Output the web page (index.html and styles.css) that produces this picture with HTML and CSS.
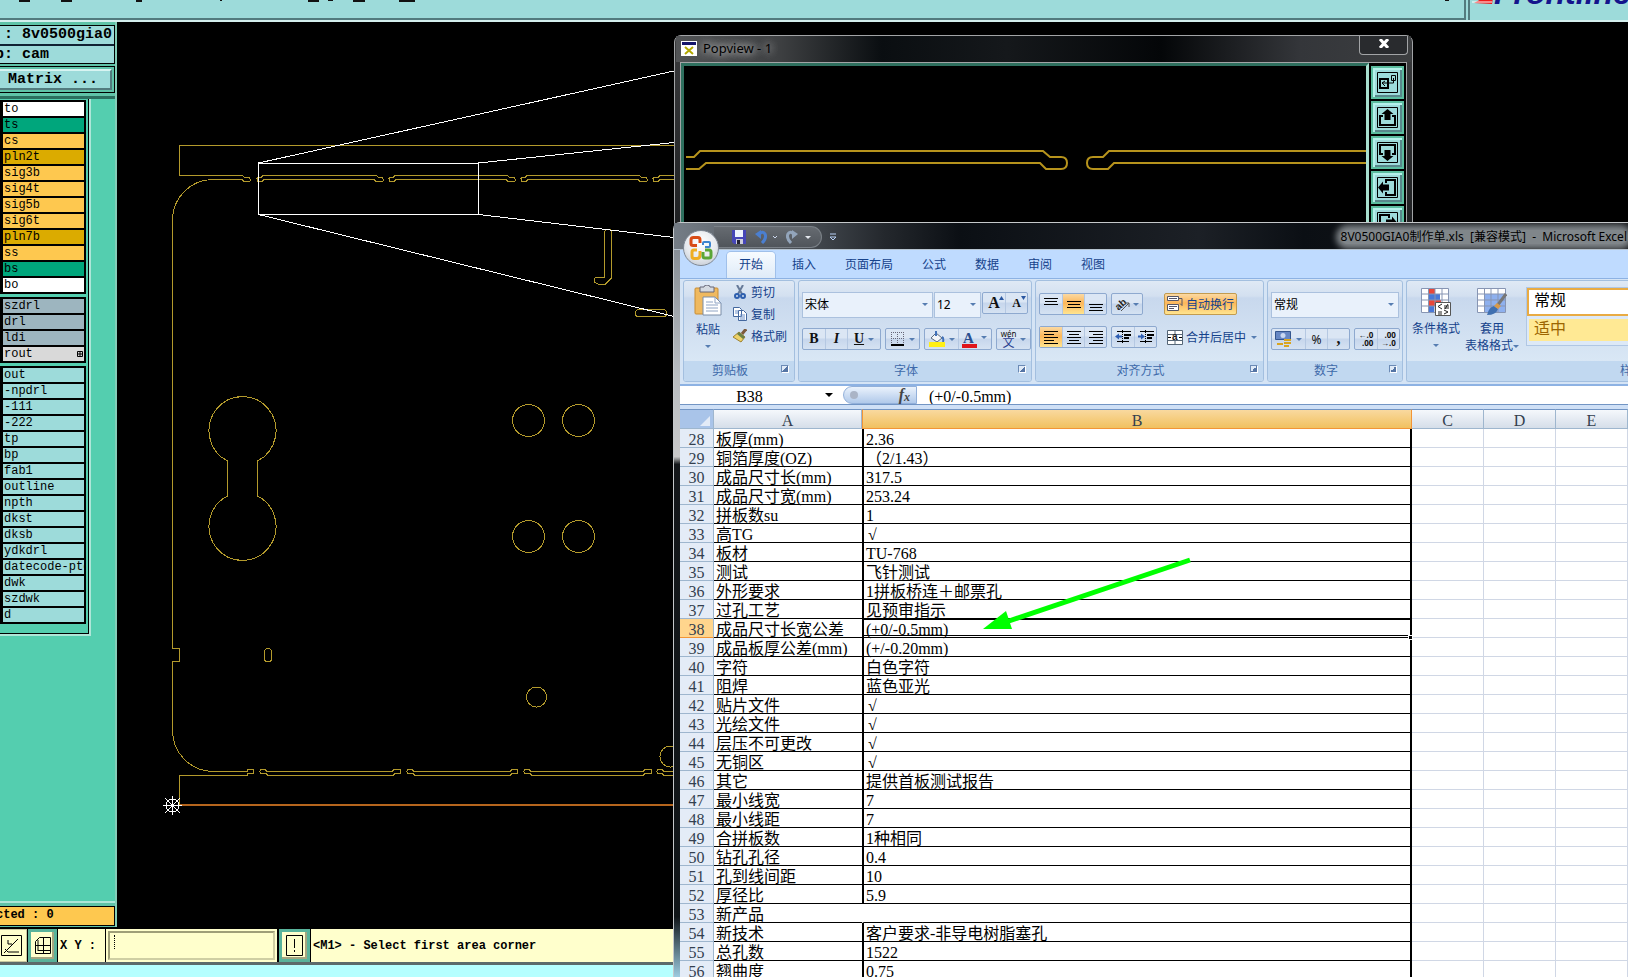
FILE: index.html
```
<!DOCTYPE html>
<html lang="zh-CN">
<head>
<meta charset="utf-8">
<title>8V0500GIA0制作单.xls - Microsoft Excel</title>
<link rel="stylesheet" href="styles.css">
</head>
<body>
<div class="desktop">
  <header class="topbar">
    <div class="topbar-main">
      <svg class="topmarks" width="1460" height="4" aria-hidden="true"><path d="M19 1h11M61 1h11M308 1h11M353 1h12M399 1h16M136 1h6M220 0h2M328 0h5M1445 0h4" stroke="#111" stroke-width="2"/></svg>
    </div>
    <div class="logo">
      <svg width="160" height="20" aria-label="Frontline"><path d="M4 3L24 -8L22 4Z" fill="#f01818"/><path d="M2 2h20" stroke="#fff"/><text x="24" y="4" class="logo-text">Frontline</text></svg>
    </div>
  </header>

  <div class="workspace">
    <aside class="sidebar">
      <div class="job">
        <div class="job-line job-name">: 8v0500gia0</div>
        <div class="job-line job-step">p: cam</div>
      </div>
      <div class="matrix-wrap"><button class="matrix">Matrix ...</button></div>
      <div class="layers-panel">
        <div class="layers">
          <ul class="layer-group">
            <li class="white">to</li><li class="green">ts</li><li class="orange">cs</li><li class="gold">pln2t</li><li class="orange">sig3b</li><li class="orange">sig4t</li><li class="orange">sig5b</li><li class="orange">sig6t</li><li class="gold">pln7b</li><li class="orange">ss</li><li class="green">bs</li><li class="white">bo</li>
          </ul>
          <ul class="layer-group">
            <li class="slate">szdrl</li><li class="slate">drl</li><li class="slate">ldi</li><li class="grey">rout<svg width="6" height="6"><path d="M.5 .5h5v5h-5zM3 0v6M0 3h6" fill="none" stroke="#000"/></svg></li>
          </ul>
          <ul class="layer-group">
            <li>out</li><li>-npdrl</li><li>-111</li><li>-222</li><li>tp</li><li>bp</li><li>fab1</li><li>outline</li><li>npth</li><li>dkst</li><li>dksb</li><li>ydkdrl</li><li>datecode-ptc</li><li>dwk</li><li>szdwk</li><li>d</li>
          </ul>
        </div>
      </div>
      <div class="selected">cted : 0</div>
    </aside>

    <main class="board">
      <svg class="drawing" aria-label="rout layer" shape-rendering="crispEdges">
        <g transform="translate(-117 -22)" fill="none" stroke="#b39a2c">
          <path d="M680 145.500H179.500V175.500H242l3 2h4q1 0 1 1v2q0 1-1 1h-5l-2-2H213A40.500 40.500 0 0 0 172.500 220V648.500H179.500V661.500H172.500V730A41 41 0 0 0 213 771.500H247l1-2h5v4h-5l-1 2H179.500V805"/>
          <path d="M263 175.500H376l3 2h3q1 0 1 1v2q0 1-1 1h-6l-2-2H264l-2 2h-4q-1 0-1-1v-2q0-1 1-1h3z"/>
          <path d="M395 175.500H507l3 2h4q1 0 1 1v2q0 1-1 1h-6l-2-2H396l-2 2h-4q-1 0-1-1v-2q0-1 1-1h3z"/>
          <path d="M527 175.500H639l3 2h4q1 0 1 1v2q0 1-1 1h-6l-2-2H528l-2 2h-4q-1 0-1-1v-2q0-1 1-1h3z"/>
          <path d="M680 175.500H660l-2 2h-4q-1 0-1 1v2q0 1 1 1h4l2-2H680"/>
          <path d="M267 771.500H392l2-2h5q2 0 2 2t-2 2h-4l-2 2H268l-2-2h-4q-2 0-2-2t2-2h3z"/>
          <path d="M414 771.500H510l2-2h4q2 0 2 2t-2 2h-4l-2 2H415l-2-2h-4q-2 0-2-2t2-2h3z"/>
          <path d="M531 771.500H643l2-2h5q2 0 2 2t-2 2h-5l-2 2H532l-2-2h-4q-2 0-2-2t2-2h3z"/>
          <path d="M680 771.500H664l-2-2h-3q-2 0-2 2t2 2h3l2 2H680"/>
          <path d="M227.500 461A33.500 34 0 1 1 257.500 461V496A33.500 34 0 1 1 227.500 496Z"/>
          <circle cx="528.500" cy="420.500" r="16"/><circle cx="578.500" cy="420.500" r="16"/>
          <circle cx="528.500" cy="536.500" r="16"/><circle cx="578.500" cy="536.500" r="16"/>
          <circle cx="536.500" cy="697" r="10"/><circle cx="670.500" cy="756.500" r="10.500"/>
          <rect x="264.500" y="648.500" width="7" height="13" rx="3"/>
          <path d="M604.500 277V232q1-3 4-3t3 3V278l-6 6H598q-4-1-4-4t4-3z"/>
          <rect x="635.500" y="309.500" width="31" height="7" rx="3"/>
          <path d="M180 805H680" stroke="#b5651d" stroke-width="2"/>
          <g stroke="#fff">
            <rect x="258.500" y="163.500" width="220" height="51"/>
            <path d="M258.500 163L674 71M478.500 163L674 142.500M478.500 214.500L674 237.500M258.500 214.500L674 316.500"/>
            <path d="M163 805.500h19M172.500 796v19M165 798l15 15M180 798l-15 15"/><circle cx="172.500" cy="805.500" r="6.500"/>
          </g>
        </g>
      </svg>
    </main>
  </div>

  <footer class="statusbar">
    <button class="tool plain" aria-label="Angle snap"><svg width="21" height="21"><path d="M.5 .5h20v20H.500zM3 18L17 4M4 14l3 3h11M7 5v4h4" fill="none" stroke="#000"/></svg></button>
    <button class="tool" aria-label="Grid"><svg width="16" height="17"><path d="M4.500 .5h11v16H.500v-12zM8.500 1v15M1 8.500h15M3 3v11M3 13.500h12" fill="none" stroke="#000"/></svg></button>
    <label class="xy" for="xy">X Y :</label>
    <span class="xy-box"><input id="xy" type="text"><i class="caret"></i></span>
    <button class="tool bang" aria-label="Interrupt"><svg width="17" height="21"><path d="M.5 .5h16v20H.500zM8.500 4v9M8.500 15v2" fill="none" stroke="#000"/></svg></button>
    <output class="message">&lt;M1&gt; - Select first area corner</output>
  </footer>
  <div class="understrip"></div>

  <section class="popview">
    <div class="pop-title">
      <svg width="16" height="15"><path d="M0 0h16v15H0z" fill="#fff"/><path d="M1 1h14v3H1z" fill="#15156a"/><path d="M4 6l8 7M12 6l-8 7" stroke="#b2a800" stroke-width="2"/></svg>
      <span>Popview - 1</span>
      <button class="pop-close" aria-label="Close"><svg width="10" height="9"><path d="M1 0l8 9M9 0L1 9" stroke="#fff" stroke-width="3"/></svg></button>
    </div>
    <div class="pop-body">
      <div class="pop-view">
        <svg class="drawing" aria-label="Zoomed rout"><g transform="translate(-684 -66)" fill="none" stroke="#b6931c" stroke-width="2"><path d="M686 157h8l6-6H1043l7 6h11q6 0 6 6t-6 6h-15l-6-6H706l-7 6H686"/><path d="M1366 151H1109l-6 6h-10q-6 0-6 6t6 6h15l6-6H1366"/></g></svg>
      </div>
      <div class="pop-tools">
        <button aria-label="Zoom window"><svg width="21" height="21"><path d="M.5 .5h20v20H.500zM14.500 3.500h4v5h-4zM16.500 6v5H11" fill="none" stroke="#000"/><path d="M3 7h8v9H3z" fill="none" stroke="#000" stroke-width="2"/><path d="M5 11h7M8 9l-3 2 3 3" fill="none" stroke="#000"/></svg></button>
        <button aria-label="Pan up"><svg width="21" height="21"><path d="M.5 .5h20v20H.500z" fill="none" stroke="#000"/><path d="M6 9H3v9h15V9h-3" fill="none" stroke="#000" stroke-width="2"/><path d="M10.500 2l6 5h-3v6h-6V7h-3z"/></svg></button>
        <button aria-label="Pan down"><svg width="21" height="21"><path d="M.5 .5h20v20H.500z" fill="none" stroke="#000"/><path d="M6 12H3V3h15v9h-3" fill="none" stroke="#000" stroke-width="2"/><path d="M10.500 19l6-5h-3V8h-6v6h-3z"/></svg></button>
        <button aria-label="Pan left"><svg width="21" height="21"><path d="M.5 .5h20v20H.500z" fill="none" stroke="#000"/><path d="M9 6V3h9v15H9v-3" fill="none" stroke="#000" stroke-width="2"/><path d="M1 10.500l5-6v3h6v6H6v3z"/></svg></button>
        <button aria-label="Pan right"><svg width="21" height="21"><path d="M.5 .5h20v20H.500z" fill="none" stroke="#000"/><path d="M12 6V3H3v15h9v-3" fill="none" stroke="#000" stroke-width="2"/><path d="M20 10.500l-5-6v3H9v6h6v3z"/></svg></button>
      </div>
    </div>
  </section>

  <section class="excel">
    <div class="xl-title">
      <div class="quick">
        <button aria-label="保存"><svg width="14" height="14"><path d="M0 0h14v14H2l-2-2z" fill="#4646b8"/><path d="M3 0h8v7H3z" fill="#eef4ff"/><path d="M4 9h7v5H4z" fill="#ccd"/><path d="M5 10h3v4H5z" fill="#223"/></svg></button>
        <button aria-label="撤消"><svg width="22" height="14"><path d="M0 4l6-4v9z" fill="#4b7fd0"/><path d="M3 5Q8 0 10 4t-3 9" fill="none" stroke="#4b7fd0" stroke-width="3"/><path d="M18 6l2 2 2-2" fill="none" stroke="#ccd8ee"/></svg></button>
        <button aria-label="恢复"><svg width="28" height="14"><path d="M12 4L6 0v9z" fill="#93a5bb"/><path d="M9 5Q4 0 2 4t3 9" fill="none" stroke="#93a5bb" stroke-width="3"/><path d="M19 6h6l-3 3z" fill="#e4e8ee"/></svg></button>
      </div>
      <button class="quick-more" aria-label="自定义快速访问工具栏"><svg width="8" height="8"><path d="M1 1h6" stroke="#b7d0f5"/><path d="M1 4h6L4 7z" fill="none" stroke="#b7d0f5"/></svg></button>
      <h1>8V0500GIA0制作单.xls&nbsp; [兼容模式] &nbsp;-&nbsp; Microsoft Excel</h1>
    </div>
    <button class="orb" aria-label="Office 按钮"><svg width="24" height="26" fill="none" stroke-width="3"><path d="M8 10.500H4Q2 10.500 2 8.500V5Q2 2.500 4.500 2.500H9Q11 2.500 11 5V8" stroke="#d84b16"/><path d="M14 10V8Q14 7 15 7H20Q21 7 21 8V11Q21 12 20 12H16" stroke="#3d84cf" stroke-width="2"/><path d="M11 16V20Q11 23.500 8 23.500H5Q3 23.500 3 21V17Q3 15 5 15H8" stroke="#efae22"/><path d="M16 15H20Q22 15 22 17V21Q22 23 20 23H16Q14 23 14 21V17" stroke="#5aa637"/></svg></button>
    <nav class="tabs">
      <button class="active">开始</button><button>插入</button><button>页面布局</button><button>公式</button><button>数据</button><button>审阅</button><button>视图</button>
    </nav>
    <div class="ribbon">
      <section class="group g-clip">
        <div class="body">
          <button class="big"><svg width="28" height="32"><rect x="1" y="3" width="23" height="26" rx="1" fill="#efb95f" stroke="#c98d33"/><path d="M6 2h4q0-2 3-2t3 2h4v5H6z" fill="#d5dae1" stroke="#667"/><path d="M9 12h12l6 6v12H9z" fill="#fff" stroke="#7b8da8"/><path d="M21 12v6h6M12 17h7M12 20h12M12 23h12M12 26h12" fill="none" stroke="#8fa4c4"/></svg><span>粘贴</span><i class="arrow"></i></button>
          <div class="stack">
            <button><svg width="14" height="14"><path d="M4 0l5 9M10 0L5 9" stroke="#667a99" stroke-width="2"/><g fill="none" stroke="#2e5fae" stroke-width="2"><circle cx="4" cy="11" r="2"/><circle cx="10" cy="11" r="2"/></g></svg>剪切</button>
            <button><svg width="14" height="14"><path d="M.5 .5h6l2 2v7h-8zM5.500 3.500h5l3 3v7h-8z" fill="#fff" stroke="#43679e"/><path d="M2 4h3M2 6h3M7 8h5M7 10h5M7 12h5" stroke="#6d90c8"/></svg>复制</button>
            <button><svg width="14" height="14"><path d="M13 0L9 5" stroke="#7c5a3c" stroke-width="3"/><path d="M6 3l6 5-4 5L0 8z" fill="#edd268" stroke="#9d8133"/><path d="M6 3l6 5-2 2-6-5z" fill="#6b8047"/></svg>格式刷</button>
          </div>
        </div>
        <h2>剪贴板<i class="launch"></i></h2>
      </section>
      <section class="group g-font">
        <div class="body rows">
          <div class="row tall">
            <span class="combo font"><select aria-label="字体"><option>宋体</option></select></span>
            <span class="combo size"><select aria-label="字号"><option>12</option></select></span>
            <div class="set push"><button class="serif f16" aria-label="增大字号">A<svg class="tick" width="5" height="4"><path d="M0 4h5L2.500 0z" fill="#2a57a0"/></svg></button><button class="serif f12" aria-label="减小字号">A<svg class="tick" width="5" height="4"><path d="M0 0h5L2.500 4z" fill="#2a57a0"/></svg></button></div>
          </div>
          <div class="row">
            <div class="set"><button class="serif">B</button><button class="serif it">I</button><button class="serif ul wide">U<i class="arrow"></i></button></div>
            <div class="set"><button class="wide" aria-label="边框"><svg width="14" height="14"><path d="M.5 0v12M6.500 0v12M12.500 0v12M0 .5h13M0 6.500h13" stroke="#667" stroke-dasharray="1 1"/><path d="M0 13h13" stroke="#000" stroke-width="2"/></svg><i class="arrow"></i></button></div>
            <div class="set"><button class="wide" aria-label="填充颜色"><svg width="16" height="16"><path d="M7 2l6 5-5 4-6-4z" fill="#f3f5f8" stroke="#5c6b80"/><path d="M7 5V0M13 6q2 1 1 5" fill="none" stroke="#4071b9" stroke-width="2"/><path d="M0 11h16v5H0z" fill="#ffef16"/></svg><i class="arrow"></i></button><button class="wide serif fontcolor" aria-label="字体颜色">A<i class="arrow"></i></button></div>
            <div class="set"><button class="wide" aria-label="拼音"><span class="wen"><small>wén</small><b>文</b></span><i class="arrow"></i></button></div>
          </div>
        </div>
        <h2>字体<i class="launch"></i></h2>
      </section>
      <section class="group g-align">
        <div class="body split">
          <div class="rows">
            <div class="row">
              <div class="set"><button aria-label="顶端对齐"><svg width="14" height="14"><path d="M0 1.500h14M1 4.500h12M0 7.500h14" stroke="#000"/></svg></button><button class="on" aria-label="垂直居中"><svg width="14" height="14"><path d="M0 4.500h14M1 7.500h12M0 10.500h14" stroke="#000"/></svg></button><button aria-label="底端对齐"><svg width="14" height="14"><path d="M0 7.500h14M1 10.500h12M0 13.500h14" stroke="#000"/></svg></button></div>
              <div class="set"><button class="orient" aria-label="方向"><svg width="16" height="15"><text x="1" y="11" class="ab" transform="rotate(-42 6 9)">ab</text><path d="M6 14l8-8M10 6h4v4" fill="none" stroke="#555"/></svg><i class="arrow"></i></button></div>
            </div>
            <div class="row">
              <div class="set"><button class="on" aria-label="左对齐"><svg width="14" height="13"><path d="M0 .5h14M0 3.500h10M0 6.500h14M0 9.500h10M0 12.500h14" stroke="#000"/></svg></button><button aria-label="居中"><svg width="14" height="13"><path d="M0 .5h14M2 3.500h10M0 6.500h14M2 9.500h10M0 12.500h14" stroke="#000"/></svg></button><button aria-label="右对齐"><svg width="14" height="13"><path d="M0 .5h14M4 3.500h10M0 6.500h14M4 9.500h10M0 12.500h14" stroke="#000"/></svg></button></div>
              <div class="set"><button aria-label="减少缩进"><svg width="16" height="14"><path d="M7.500 0v14" stroke="#000" stroke-dasharray="1 1"/><path d="M2 1.500h14M2 11.500h12" stroke="#000"/><path d="M9 5h7M9 8h5" stroke="#000" stroke-width="2"/><path d="M0 6.500l4-3v2h3v2H4v2z" fill="#2f5fb3"/></svg></button><button aria-label="增加缩进"><svg width="16" height="14"><path d="M7.500 0v14" stroke="#000" stroke-dasharray="1 1"/><path d="M2 1.500h14M2 11.500h12" stroke="#000"/><path d="M9 5h7M9 8h5" stroke="#000" stroke-width="2"/><path d="M7 6.500l-4-3v2H0v2h3v2z" fill="#2f5fb3"/></svg></button></div>
            </div>
          </div>
          <div class="rows divided">
            <div class="row"><button class="text on boxed"><svg width="16" height="16"><path d="M.5 .5h11v4H.500zM.5 8.500h11v6H.500z" fill="#fff" stroke="#556"/><path d="M2 2.500h8M2 10.500h8M2 12.500h5M11 2.500h4v7l-2-2" fill="none" stroke="#556"/></svg>自动换行</button></div>
            <div class="row"><button class="text"><svg width="16" height="15"><path d="M.5 .5h15v14H.500zM8 0v4M8 11v4M0 4.500h16M0 10.500h16" fill="#fff" stroke="#567"/><text x="5" y="10" class="ab">a</text><path d="M1 7.500h3M12 7.500h3" stroke="#000"/></svg>合并后居中<i class="arrow"></i></button></div>
          </div>
        </div>
        <h2>对齐方式<i class="launch"></i></h2>
      </section>
      <section class="group g-num">
        <div class="body rows">
          <div class="row tall"><span class="combo numfmt"><select aria-label="数字格式"><option>常规</option></select></span></div>
          <div class="row">
            <div class="set"><button class="wide" aria-label="会计数字格式"><svg width="17" height="16"><path d="M.5 .5h15v8H.500z" fill="#6687c4" stroke="#34568f"/><circle cx="8" cy="4.500" r="2.500" fill="#c9d8f2"/><path d="M9 9h7M9 12h7M9 15h5M2 13h6" stroke="#d9a520" stroke-width="2"/></svg><i class="arrow"></i></button><button class="pct">%</button><button class="serif f16" aria-label="千位分隔">,</button></div>
            <div class="set"><button class="dec" aria-label="增加小数位数"><span>←.0<br>.00</span></button><button class="dec" aria-label="减少小数位数"><span>.00<br>→.0</span></button></div>
          </div>
        </div>
        <h2>数字<i class="launch"></i></h2>
      </section>
      <section class="group g-style">
        <div class="body">
          <button class="big"><svg width="30" height="30"><path d="M.5 1.500h27v24H.500z" fill="#fff"/><path d="M7 1h7v6H7zM7 13h13v6H7z" fill="#e8473a"/><path d="M7 7h12v6H7zM7 19h6v6H7z" fill="#4878d8"/><path d="M.5 1.500h27v24H.500zM7.500 1v24M14 1v24M21 1v24M0 7h28M0 13h28M0 19h28" fill="none" stroke="#8795b3"/><path d="M14.500 15.500h15v13h-15z" fill="#fff" stroke="#555"/><path d="M21 17l-4 2.500 4 2.500M17 25h4M17 27h4M23 19h5M23 21h5M27 17l-3 5M23 23l4 2-4 2" fill="none" stroke="#222"/></svg><span>条件格式</span><i class="arrow"></i></button>
          <button class="big"><svg width="30" height="30"><path d="M.5 1.500h28v24H.500z" fill="#fff"/><path d="M8 7h20v18H8z" fill="#8eb0ee"/><path d="M.5 1.500h28v24H.500zM7.500 1v24M14 1v24M21 1v24M0 7h28M0 13h28M0 19h28" fill="none" stroke="#8795b3"/><path d="M29 7l-9 12" stroke="#777" stroke-width="3"/><path d="M10 28q2-8 7-9l4 3q-2 6-11 6z" fill="#3f6fb0"/><path d="M17 19l3-3 4 3-3 3z" fill="#d89a4a"/></svg><span>套用</span><span>表格格式<i class="arrow"></i></span></button>
          <div class="gallery"><button class="normal">常规</button><button class="medium">适中</button></div>
        </div>
        <h2 class="edge">样式</h2>
      </section>
    </div>
    <div class="formula">
      <span class="namebox"><input type="text" value="B38" aria-label="名称框"><i class="arrow dark"></i></span>
      <span class="fx"><i class="dot"></i><em>f<sub>x</sub></em></span>
      <input class="fbox" type="text" value="(+0/-0.5mm)" aria-label="编辑栏">
    </div>
    <div class="sheet">
      <table>
        <colgroup><col class="c0"><col class="c1"><col class="c2"><col class="c3"><col class="c3"><col></colgroup>
        <thead><tr><th class="corner"><svg width="10" height="10"><path d="M10 0v10H0z" fill="#e3ebf7"/></svg></th><th>A</th><th class="sel">B</th><th>C</th><th>D</th><th>E</th></tr></thead>
        <tbody>
          <tr><th>28</th><td>板厚(mm)</td><td>2.36</td><td></td><td></td><td></td></tr>
          <tr><th>29</th><td>铜箔厚度(OZ)</td><td>（2/1.43）</td><td></td><td></td><td></td></tr>
          <tr><th>30</th><td>成品尺寸长(mm)</td><td>317.5</td><td></td><td></td><td></td></tr>
          <tr><th>31</th><td>成品尺寸宽(mm)</td><td>253.24</td><td></td><td></td><td></td></tr>
          <tr><th>32</th><td>拼板数su</td><td>1</td><td></td><td></td><td></td></tr>
          <tr><th>33</th><td>高TG</td><td class="ck">√</td><td></td><td></td><td></td></tr>
          <tr><th>34</th><td>板材</td><td>TU-768</td><td></td><td></td><td></td></tr>
          <tr><th>35</th><td>测试</td><td>飞针测试</td><td></td><td></td><td></td></tr>
          <tr><th>36</th><td>外形要求</td><td>1拼板桥连＋邮票孔</td><td></td><td></td><td></td></tr>
          <tr><th>37</th><td>过孔工艺</td><td>见预审指示</td><td></td><td></td><td></td></tr>
          <tr class="cur"><th>38</th><td>成品尺寸长宽公差</td><td>(+0/-0.5mm)<i class="handle"></i></td><td></td><td></td><td></td></tr>
          <tr><th>39</th><td>成品板厚公差(mm)</td><td>(+/-0.20mm)</td><td></td><td></td><td></td></tr>
          <tr><th>40</th><td>字符</td><td>白色字符</td><td></td><td></td><td></td></tr>
          <tr><th>41</th><td>阻焊</td><td>蓝色亚光</td><td></td><td></td><td></td></tr>
          <tr><th>42</th><td>贴片文件</td><td class="ck">√</td><td></td><td></td><td></td></tr>
          <tr><th>43</th><td>光绘文件</td><td class="ck">√</td><td></td><td></td><td></td></tr>
          <tr><th>44</th><td>层压不可更改</td><td class="ck">√</td><td></td><td></td><td></td></tr>
          <tr><th>45</th><td>无铜区</td><td class="ck">√</td><td></td><td></td><td></td></tr>
          <tr><th>46</th><td>其它</td><td>提供首板测试报告</td><td></td><td></td><td></td></tr>
          <tr><th>47</th><td>最小线宽</td><td>7</td><td></td><td></td><td></td></tr>
          <tr><th>48</th><td>最小线距</td><td>7</td><td></td><td></td><td></td></tr>
          <tr><th>49</th><td>合拼板数</td><td>1种相同</td><td></td><td></td><td></td></tr>
          <tr><th>50</th><td>钻孔孔径</td><td>0.4</td><td></td><td></td><td></td></tr>
          <tr><th>51</th><td>孔到线间距</td><td>10</td><td></td><td></td><td></td></tr>
          <tr><th>52</th><td>厚径比</td><td>5.9</td><td></td><td></td><td></td></tr>
          <tr class="merged"><th>53</th><td>新产品</td><td></td><td></td><td></td><td></td></tr>
          <tr><th>54</th><td>新技术</td><td>客户要求-非导电树脂塞孔</td><td></td><td></td><td></td></tr>
          <tr><th>55</th><td>总孔数</td><td>1522</td><td></td><td></td><td></td></tr>
          <tr><th>56</th><td>翘曲度</td><td>0.75</td><td></td><td></td><td></td></tr>
        </tbody>
      </table>
      <svg class="pointer" width="210" height="76" aria-hidden="true"><path d="M208 3L24 65" stroke="#0f0" stroke-width="5"/><path d="M1 72L24 54L30 72Z" fill="#0f0"/></svg>
    </div>
  </section>
</div>
</body>
</html>
```
FILE: styles.css
```
* { box-sizing: border-box; }
html, body { height: 100%; }
body { margin: 0; overflow: hidden; background: #000; font-family: "Noto Sans", "Noto Sans CJK SC", sans-serif; font-size: 12px; }
button, input, select { font: inherit; color: inherit; margin: 0; padding: 0; border: 0; background: none; border-radius: 0; }
svg { display: block; flex: none; }
ul, h1, h2 { margin: 0; padding: 0; font-weight: normal; font-size: 12px; list-style: none; }

.desktop { position: relative; height: 100vh; display: flex; flex-direction: column; overflow: hidden; }

/* CAM station: header */
.topbar { display: flex; height: 22px; background: #9ddbda; border-bottom: 2px solid #d4efee; flex: none; }
.topbar-main { flex: 1; min-width: 0; overflow: hidden; border-right: 2px solid #527b7e; border-bottom: 2px solid #527b7e; }
.logo { width: 160px; flex: none; overflow: hidden; border-left: 2px solid #527b7e; margin-left: 2px; }
.logo-text { font: italic bold 32px "Liberation Sans", sans-serif; fill: #14148c; }

/* CAM station: layer list */
.workspace { flex: 1; min-height: 0; display: flex; }
.sidebar { width: 117px; flex: none; display: flex; flex-direction: column; background: #5fc3a8; border-right: 2px solid #84cdb8; padding: 3px 0 1px; font: bold 12px "Liberation Mono", monospace; overflow: hidden; white-space: nowrap; }
.job { border: 1px solid #000; border-left: 0; background: #9ddbda; font-size: 15px; }
.job-line { height: 18px; line-height: 18px; }
.job-step { border-top: 2px solid #123; height: 19px; text-indent: -5px; }
.job-name { text-indent: 4px; }
.matrix-wrap { margin: 2px 0 3px 0; border: 1px solid #000; border-left: 0; padding: 2px 2px 2px 0; }
.matrix { display: block; width: 100%; height: 21px; background: #9ddbda; font-size: 15px; text-align: left; padding-left: 8px; border: 2px solid #527b7e; border-left: 0; border-top-color: #d8f4f2; }
.layers-panel { flex: 1; min-height: 0; background: #54ceaf; border-top: 3px solid #2b6f5f; border-bottom: 2px solid #aee6d8; }
.layers { width: 91px; border-right: 2px solid #aee6d8; border-bottom: 2px solid #aee6d8; padding: 1px 0 7px; box-shadow: inset -1px -1px #000; }
.layer-group { width: 86px; padding: 2px 2px 1px 3px; background: #000; margin-bottom: 3px; }
.layer-group li { display: flex; align-items: center; justify-content: space-between; height: 14px; line-height: 14px; margin-bottom: 2px; padding: 0 1px; background: #9ddbda; overflow: hidden; }
.layer-group li:last-child { margin-bottom: 1px; }
.layer-group .white { background: #fff; }
.layer-group .green { background: #00a67c; }
.layer-group .orange { background: #fec84f; }
.layer-group .gold { background: #dbab00; }
.layer-group .slate { background: #9db5bf; }
.layer-group .grey { background: #d9d9d9; }
.selected { height: 20px; line-height: 17px; margin-top: 3px; background: #fec84f; border: 1px solid #000; border-left: 0; text-indent: -4px; }

.board { flex: 1; min-width: 0; background: #000; position: relative; }
.drawing { width: 100%; height: 100%; }

/* CAM station: status line */
.statusbar { flex: none; display: flex; height: 33px; margin-top: 2px; background: #000; gap: 1px; font: bold 12px "Liberation Mono", monospace; }
.tool { width: 29px; flex: none; display: flex; align-items: center; justify-content: center; background: #ffffcc; border: 3px solid #59b39b; box-shadow: inset -2px -2px #a5a581; }
.tool.plain { width: 27px; border: 1px solid #c8c8a0; border-left: 0; box-shadow: none; padding-right: 4px; }
.xy { width: 47px; display: flex; align-items: center; background: #ffffcc; padding-left: 2px; white-space: nowrap; }
.xy-box { width: 171px; display: flex; padding: 2px; background: #ffffcc; position: relative; }
.xy-box input { width: 100%; border: 2px solid #9f9f78; border-right-color: #cfcfa3; border-bottom-color: #cfcfa3; }
.caret { position: absolute; left: 8px; top: 6px; height: 14px; border-left: 1px dotted #000; }
.tool.bang { margin-left: 1px; width: 31px; }
.message { flex: 1; display: flex; align-items: center; background: #ffffcc; padding-left: 2px; white-space: nowrap; }
.understrip { flex: none; height: 15px; background: #b5ffff; border-top: 3px solid #5c6b6b; }

/* Popview window */
.popview { position: absolute; left: 674px; top: 35px; width: 739px; height: 240px; background: linear-gradient(#3a3b3d, #17191b); border: 1px solid #a2a4a6; border-radius: 7px 7px 0 0; padding: 0 5px 0 5px; }
.pop-title { display: flex; align-items: center; height: 26px; gap: 6px; margin: 0 -4px; padding: 0 0 2px 5px; background: linear-gradient(90deg, #525456 0, #3e4042 14%, #0a0e11 28%, #15181b 45%, #040608 66%, #34363a 85%, #3c3e40); font-size: 13px; line-height: 16px; color: #000; }
.pop-title span { text-shadow: 0 0 8px #ddd, 0 0 8px #aaa; }
.pop-close { margin: 0 3px 0 auto; width: 49px; height: 19px; align-self: flex-start; display: flex; align-items: center; justify-content: center; border: 1px solid #a2a4a6; border-top: 0; border-radius: 0 0 4px 4px; background: #292b2e; }
.pop-close svg { margin-bottom: 3px; }
.pop-body { display: flex; height: 200px; border: 1px solid #a2a4a6; background: #000; }
.pop-view { flex: 1; min-width: 0; border: 3px solid #2f705f; border-right-color: #a8dfcf; border-bottom: 0; }
.pop-tools { width: 37px; display: flex; flex-direction: column; gap: 2px; padding: 3px 2px 0; }
.pop-tools button { width: 33px; height: 33px; flex: none; display: flex; align-items: center; justify-content: center; background: #9ddbda; border: 2px solid #5bbd9f; box-shadow: inset 2px 2px #b5f1eb, inset -2px -2px #59888b; }

/* Excel window */
.excel { position: absolute; left: 673px; right: 0; top: 222px; bottom: 0; display: flex; flex-direction: column; padding-left: 6px; background: linear-gradient(#7d858d 0, #b8bcc0 20%, #c9c9c9 31%, #14171a 32%, #101518 92%, #9ccbe0); border-top: 1px solid #c5c8ca; border-left: 1px solid #c5c8ca; border-radius: 7px 0 0 0; color: #15428b; }
.xl-title { flex: none; display: flex; align-items: center; height: 27px; margin-left: -6px; padding: 2px 1px 0 40px; background: linear-gradient(90deg, #757d86 0, #555b62 10%, #24282d 22%, #0b0f14 30%, #1c2026 55%, #0b0f14 66%, #181a1d); border-bottom: 1px solid #b7c4d0; overflow: hidden; }
.quick { display: flex; align-items: center; gap: 9px; height: 22px; width: 108px; padding-left: 18px; background: linear-gradient(#666b71, #50555b); border: 1px solid #7a8087; border-left: 0; border-radius: 0 11px 11px 0; }
.quick-more { margin-left: 7px; }
.xl-title h1 { margin-left: auto; color: #000; white-space: nowrap; line-height: 14px; background: #80868a; box-shadow: 0 0 6px 5px #80868a; border-radius: 8px; }
.orb { position: absolute; left: 9px; top: 7px; width: 36px; height: 36px; border-radius: 50%; background: radial-gradient(circle at 50% 35%, #fff, #e6e9ee 55%, #b8bfc9); border: 1px solid #7f8894; display: flex; align-items: center; justify-content: center; }
.tabs { flex: none; display: flex; gap: 5px; height: 28px; padding: 2px 0 0 47px; background: #bfdbff; }
.tabs button { padding: 0 12px 2px; height: 26px; white-space: nowrap; }
.tabs .active { background: linear-gradient(#f7fbff, #dfebf8); border-radius: 4px 4px 0 0; box-shadow: 0 0 0 1px #a0c0ea; clip-path: inset(-1px -1px 0 -1px); }
.ribbon { flex: none; display: flex; gap: 3px; height: 108px; padding: 1px 0 2px 3px; background: #d5e4f5; border-top: 1px solid #8db2e3; border-bottom: 2px solid #8db2e3; overflow: hidden; }
.group { display: flex; flex-direction: column; flex: none; border: 1px solid #a3bfdf; border-radius: 3px; background: linear-gradient(#dfe9f5 0, #d3e0f0 15%, #c8d8ed 17%, #d9e7f5 80%); overflow: hidden; }
.g-clip { width: 112px; } .g-font { width: 234px; } .g-align { width: 229px; } .g-num { width: 136px; } .g-style { flex: 1; border-right: 0; border-radius: 3px 0 0 3px; }
.group h2 { height: 20px; line-height: 20px; text-align: center; background: #c1d8f0; color: #3e6aaa; position: relative; padding-right: 18px; flex: none; }
.group h2.edge { text-align: right; padding: 0; margin-right: -16px; }
.launch { position: absolute; right: 5px; top: 4px; width: 8px; height: 8px; border: 1px solid #6b8ab5; border-right-color: #fff; border-bottom-color: #fff; background: linear-gradient(135deg, #dfeaf7 50%, #5575a5 50%); }
.body { flex: 1; min-height: 0; display: flex; }
.rows { display: flex; flex-direction: column; padding: 11px 3px 0; gap: 13px; }
.body.rows { gap: 10px; }
.row { display: flex; gap: 4px; height: 22px; align-items: flex-start; flex: none; }
.row.tall { height: 26px; gap: 1px; }
.push { margin-left: auto; }
.set { display: flex; border: 1px solid #8ea9cf; border-radius: 2px; background: linear-gradient(#dbe6f4 45%, #c6d6ec 50%, #d5e2f2); height: 22px; flex: none; }
.set button { width: 22px; height: 20px; display: flex; align-items: center; justify-content: center; gap: 4px; position: relative; }
.set button + button { border-left: 1px solid #b5c8e2; }
.set .wide { width: 33px; }
.set .orient { width: 30px; gap: 2px; }
.ab { font: bold 10px "Liberation Sans", sans-serif; fill: #222; }
.tick { position: absolute; right: 1px; top: 3px; }
.serif { font-family: "Liberation Serif", serif; font-weight: bold; font-size: 14px; color: #111; line-height: 18px; }
.f16 { font-size: 16px; } .f12 { font-size: 12px; }
.it { font-style: italic; }
.ul { text-decoration: underline; }
.set .fontcolor { color: #2a4f8f; font-size: 15px; gap: 7px; padding-bottom: 3px; }
.fontcolor::before { content: ""; position: absolute; left: 3px; bottom: 1px; width: 15px; height: 4px; background: #e0151b; }
.pct { color: #111; font-size: 12px; }
.dec { color: #111; font: bold 8px/8px "Noto Sans", sans-serif; text-align: right; }
.wen { display: flex; flex-direction: column; align-items: center; line-height: 9px; color: #111; }
.wen small { font-size: 8px; line-height: 7px; } .wen b { font-size: 12px; line-height: 12px; color: #2a3f8f; font-weight: normal; }
.arrow { display: inline-block; width: 0; height: 0; flex: none; border: 3px solid transparent; border-top-color: #567db1; border-bottom: 0; vertical-align: 2px; }
.arrow.dark { border-width: 4px 4px 0; border-top-color: #000; }
.combo { position: relative; display: flex; height: 26px; background: #e9f1fb; border: 1px solid #abc1de; color: #000; }
.combo select { width: 100%; appearance: none; padding: 0 0 2px 2px; }
.combo::after { content: ""; position: absolute; right: 4px; top: 10px; border: 3px solid transparent; border-top-color: #567db1; border-bottom: 0; pointer-events: none; }
.font { width: 131px; } .size { width: 47px; } .numfmt { width: 128px; }
.big { display: flex; flex-direction: column; align-items: center; padding-top: 4px; line-height: 17px; white-space: nowrap; }
.g-clip .big { width: 48px; } .g-clip .big svg { margin-bottom: 4px; }
.g-clip .big .arrow { margin-top: 7px; }
.g-style .big { width: 58px; padding-top: 6px; } .g-style .big svg { margin-bottom: 3px; } .g-style .big + .big { width: 54px; }
.g-style .big > .arrow { margin-top: 7px; }
.stack { display: flex; flex-direction: column; }
.stack button { display: flex; align-items: center; gap: 4px; height: 22px; padding-left: 1px; white-space: nowrap; }
.on { background: linear-gradient(#fbd9a2, #fcb75a 45%, #ffe48f); }
.split .rows { padding-top: 12px; gap: 11px; }
.divided .row { margin-left: 1px; }
.text { display: flex; align-items: center; gap: 3px; height: 22px; white-space: nowrap; border: 1px solid transparent; }
.split .text { padding: 0 2px; }
.text .arrow { margin-left: 2px; }
.split .boxed { border: 1px solid #c29b50; border-radius: 2px; }
.gallery { flex: 1; margin: 6px 0 15px 7px; border: 1px solid #b0c7e4; border-right: 0; background: #dde9f7; display: flex; flex-direction: column; gap: 3px; color: #000; font-size: 16px; }
.gallery button { text-align: left; line-height: 18px; padding: 0 0 5px 5px; }
.gallery .normal { border: 2px solid #e9ab43; border-right: 0; height: 28px; background: #fff; }
.gallery .medium { height: 22px; margin-left: 2px; background: #ffe994; color: #9c6500; }

.formula { flex: none; display: flex; height: 19px; background: #fff; border-bottom: 1px solid #7295c4; color: #000; font: 16px "Liberation Serif", "Noto Sans CJK SC", serif; }
.formula input { line-height: 17px; padding-top: 2px; }
.namebox { width: 163px; display: flex; align-items: center; }
.namebox input { width: 141px; text-align: center; padding-right: 2px; }
.namebox .arrow { margin-left: 4px; }
.fx { width: 74px; display: flex; align-items: center; justify-content: space-between; padding: 0 6px; background: linear-gradient(#eaf2fc, #b0c9ea); border: 1px solid #92b0da; border-radius: 9px 0 0 9px; color: #444; font-weight: bold; }
.fx .dot { width: 8px; height: 8px; border-radius: 50%; background: #aab4c6; }
.fx sub { font-size: 12px; vertical-align: -1px; }
.formula .fbox { flex: 1; min-width: 0; padding-left: 12px; }

.sheet { flex: 1; min-height: 0; overflow: hidden; position: relative; background: #fff; border-top: 4px solid #cfe0f6; font: 16px "Liberation Serif", "Noto Sans CJK SC", serif; }
table { width: 100%; table-layout: fixed; border-collapse: separate; border-spacing: 0; color: #000; }
.c0 { width: 34px; } .c1 { width: 148px; } .c2 { width: 550px; } .c3 { width: 72px; }
th, td { height: 19px; line-height: 15px; padding: 3px 0 0; white-space: nowrap; font-weight: normal; }
td { padding-left: 2px; border-bottom: 1px solid #d0d7e5; border-right: 1px solid #d0d7e5; }
th { background: #e4ecf7; color: #333f4f; border-bottom: 1px solid #9eb6ce; border-right: 1px solid #9eb6ce; }
thead th { height: 20px; background: linear-gradient(#f5f8fc, #d5dee9); border-top: 1px solid #7295c4; }
thead .sel { background: linear-gradient(#f9d99f, #f1c15f); border-right-color: #f29536; border-bottom-color: #f29536; border-left: 1px solid #f29536; }
thead .corner { background: #a9c4e9; }
.corner svg { margin: 0 0 0 20px; }
td:nth-child(2) { border-bottom-color: #000; border-right: 0; }
td:nth-child(3) { border-bottom-color: #000; border-left: 2px solid #000; border-right: 2px solid #000; }
.merged td:nth-child(3) { border-left-color: #fff; }
.ck { padding-left: 4px; }
.cur th { background: #ffd58d; border-bottom-color: #f29536; }
.cur td:nth-child(3) { position: relative; box-shadow: inset 0 1px #000, inset 0 -1px #fff, inset 0 -2px #000; }
.handle { position: absolute; right: -3px; bottom: -3px; width: 5px; height: 5px; background: #000; border: 1px solid #fff; }
.pointer { position: absolute; left: 302px; top: 148px; }
```
